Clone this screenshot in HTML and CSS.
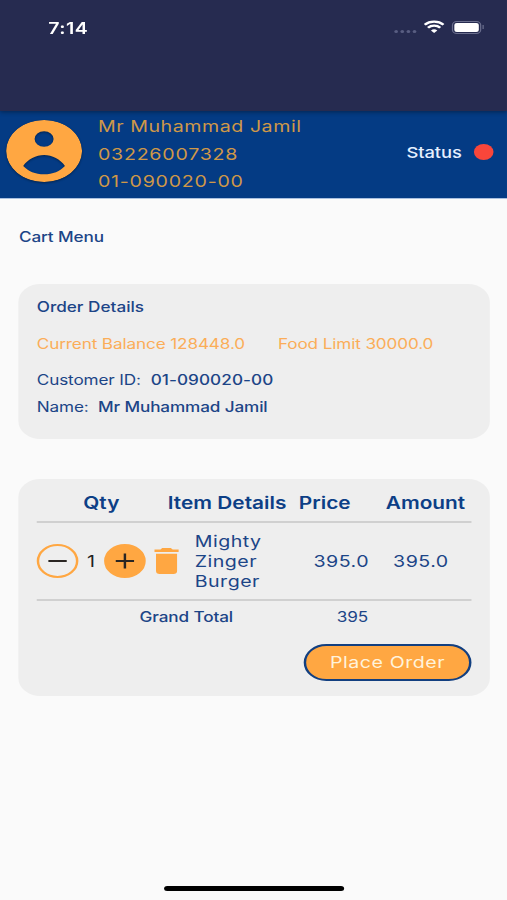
FILE: index.html
```
<!DOCTYPE html>
<html>
<head>
	<meta charset="utf-8">
	<title>Cart Menu</title>
	<link rel="stylesheet" href="styles.css">
</head>
<body>
	<div class="phone">
		<div class="appbar">
			<span class="time">7:14</span>
			<div class="signal"><i></i><i></i><i></i><i></i></div>
			<svg class="wifi" width="17" height="13" viewBox="0 0 17 13">
				<path d="M.8 4.700a11 11 0 0 1 15.400 0M3.500 7.700a7 7 0 0 1 10 0" fill="none" stroke="#fff" stroke-width="2.300"/>
				<path d="M8.500 13L5.900 10.400a3.800 3.800 0 0 1 5.200 0z" fill="#fff"/>
			</svg>
			<div class="battery"><div class="level"></div></div>
			<div class="cap"></div>
		</div>
		<div class="profile">
			<svg class="avatar" width="62" height="62" viewBox="2 2 20 20">
				<path fill="#ffa742" d="M12 2C6.480 2 2 6.480 2 12s4.480 10 10 10 10-4.480 10-10S17.520 2 12 2zm0 3.600a2.500 2.500 0 1 1 0 5 2.500 2.500 0 0 1 0-5zm0 13.900c-2.300 0-4.200-1-5.500-2.700 1.200-2.100 3.400-3.500 5.500-3.500s4.300 1.400 5.500 3.500c-1.300 1.700-3.200 2.700-5.500 2.700z"/>
			</svg>
			<div class="info">
				<div class="fullname">Mr Muhammad Jamil</div>
				<div class="mobile">03226007328</div>
				<div class="account">01-090020-00</div>
			</div>
			<div class="status">Status</div>
			<div class="dot"></div>
		</div>
		<div class="title">Cart Menu</div>

		<div class="card order">
			<div class="heading">Order Details</div>
			<div class="limits">
				<span class="balance">Current Balance 128448.0</span>
				<span class="food">Food Limit 30000.0</span>
			</div>
			<div class="row"><span class="label1">Customer ID:</span><b class="cid">01-090020-00</b></div>
			<div class="row"><span class="label2">Name:</span><b class="cname">Mr Muhammad Jamil</b></div>
		</div>

		<div class="card cart">
			<div class="head">
				<span class="qty">Qty</span>
				<span class="details">Item Details</span>
				<span class="price">Price</span>
				<span class="amount">Amount</span>
			</div>
			<div class="item">
				<div class="round minus">
					<svg width="16" height="16" viewBox="0 0 16 16"><path d="M.5 8h15" stroke="#2a2623" stroke-width="2"/></svg>
				</div>
				<span class="count">1</span>
				<div class="round plus">
					<svg width="16" height="16" viewBox="0 0 16 16"><path d="M.5 8h15M8 .5v15" stroke="#2a2623" stroke-width="2"/></svg>
				</div>
				<svg class="trash" width="20" height="26" viewBox="0 0 20 26">
					<path fill="#ffa742" d="M0 1.500h5L6.500 0h7L15 1.500h5V4H0zM1.400 5.700h17.200V23a3 3 0 0 1-3 3H4.400a3 3 0 0 1-3-3z"/>
				</svg>
				<span class="name">Mighty Zinger Burger</span>
				<span class="cost">395.0</span>
				<span class="cost">395.0</span>
			</div>
			<div class="total">
				<span class="grand">Grand Total</span>
				<span class="sum">395</span>
			</div>
			<div class="place">Place Order</div>
		</div>
		<div class="home"></div>
	</div>
</body>
</html>
```
FILE: styles.css
```
body {
	margin: 0;
	background: #fafafa;
	overflow: hidden;
}
/* 414pt wide screen stretched to the window */
.phone {
	width: 414px;
	height: 900px;
	transform: scaleX(1.2246);
	transform-origin: 0 0;
	display: flex;
	flex-direction: column;
	background: #fafafa;
	font-family: Inter, "Liberation Sans", sans-serif;
	font-size: 14px;
	letter-spacing: -.1px;
	color: #1c4587;
	white-space: nowrap;
}
.appbar {
	height: 111px;
	box-sizing: border-box;
	padding: 17px 19px 0 39.5px;
	display: flex;
	align-items: flex-start;
	background: #262b50;
	color: #fff;
	box-shadow: 0 1px 4px rgba(0,0,0,.4);
	z-index: 1;
}
.time {
	font-size: 16px;
	line-height: 22px;
	font-weight: 600;
	letter-spacing: .3px;
	margin-right: auto;
}
.signal {
	display: flex;
	gap: 2px;
	padding: 13px 6px 0 0;
}
.signal i {
	width: 3px;
	height: 3px;
	border-radius: 50%;
	background: #595e82;
}
.wifi {
	margin: 3px 6px 0 0;
}
.battery {
	width: 24px;
	height: 13px;
	box-sizing: border-box;
	border: 1px solid #6b6f8e;
	border-radius: 4px;
	padding: 1px;
	margin: 4px 1px 0 0;
}
.level {
	height: 9px;
	border-radius: 2px;
	background: #fff;
}
.cap {
	width: 1px;
	height: 4px;
	margin-top: 8px;
	background: #6b6f8e;
}
.profile {
	height: 87px;
	display: flex;
	background: #043b84;
	border-bottom: 1px solid #a9c0e0;
}
.avatar {
	margin: 9px 13px 0 5px;
	border-radius: 50%;
	filter: drop-shadow(0 1px 1px rgba(0,0,0,.4));
}
.info {
	width: 252px;
	padding-top: 2px;
	font-size: 16px;
	line-height: 27.6px;
	letter-spacing: .45px;
	color: #cf9848;
}
.mobile, .account {
	letter-spacing: .62px;
}
.status {
	width: 55px;
	padding-top: 31px;
	font-size: 15px;
	line-height: 22px;
	font-weight: 500;
	color: #e6f0ff;
}
.dot {
	width: 16px;
	height: 16px;
	margin-top: 33px;
	border-radius: 50%;
	background: #f9463a;
}
.title {
	padding: 28px 0 0 15.5px;
	line-height: 20px;
	font-weight: 500;
}
.card {
	width: 385px;
	box-sizing: border-box;
	margin-left: 15px;
	border-radius: 18px;
	background: #eee;
}
.order {
	height: 155px;
	margin-top: 37px;
	padding: 13px 15px;
}
.heading {
	line-height: 20px;
	font-weight: 500;
	letter-spacing: 0;
}
.limits {
	display: flex;
	padding: 17px 0 16px;
	line-height: 20px;
	color: #fbad58;
}
.balance {
	width: 197px;
}
.row {
	line-height: 26.5px;
	margin-top: -3px;
	margin-bottom: 3px;
}
.row b {
	font-weight: 500;
}
.row .cid {
	letter-spacing: .06px;
}
.label1 {
	display: inline-block;
	width: 93px;
}
.label2 {
	display: inline-block;
	width: 50px;
}
.cart {
	height: 217px;
	margin-top: 40px;
	padding: 0 15px;
	display: flex;
	flex-direction: column;
}
.head {
	display: grid;
	grid-template-columns: 107px 107px 71px 1fr;
	height: 42px;
	box-sizing: border-box;
	padding-top: 12px;
	line-height: 24px;
	font-size: 17px;
	font-weight: 600;
	letter-spacing: 0;
	color: #0d3f86;
}
.qty {
	padding-left: 38px;
}
.item {
	display: grid;
	grid-template-columns: 34px 21px 34px 34px 97px 65px 1fr;
	align-items: center;
	height: 80px;
	box-sizing: border-box;
	border-top: 2px solid #d0d0d0;
	border-bottom: 2px solid #d0d0d0;
	font-size: 16px;
	letter-spacing: .4px;
}
.round {
	width: 34px;
	height: 34px;
	box-sizing: border-box;
	border: 2px solid #ffa742;
	border-radius: 50%;
	display: flex;
	align-items: center;
	justify-content: center;
}
.plus {
	background: #ffa742;
}
.count {
	text-align: center;
	color: #222;
}
.trash {
	margin-left: 6.5px;
}
.name {
	width: 60px;
	padding-left: 6px;
	line-height: 20.3px;
	white-space: normal;
}
.cost {
	padding-left: 6px;
}
.total {
	display: flex;
	padding: 6px 0 0 84px;
	line-height: 20px;
}
.grand {
	width: 161px;
	font-weight: 500;
}
.place {
	align-self: flex-end;
	width: 137px;
	height: 37px;
	box-sizing: border-box;
	margin-top: 17px;
	border: 2px solid #123f80;
	border-radius: 19px;
	background: #ffa742;
	color: #fff3dc;
	font-size: 16px;
	line-height: 33px;
	letter-spacing: .45px;
	text-align: center;
}
.home {
	width: 147px;
	height: 5px;
	margin: auto auto 9px 134px;
	border-radius: 3px;
	background: #000;
}
```
